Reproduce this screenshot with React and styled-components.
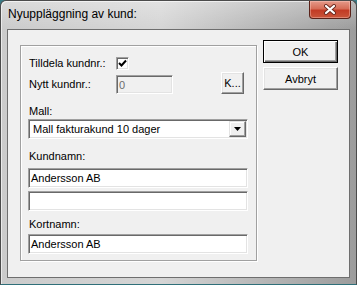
import React from 'react';
import styled, { createGlobalStyle } from 'styled-components';

const GlobalStyle = createGlobalStyle`
  html, body {
    margin: 0;
    padding: 0;
    background: #3a7b86;
  }
  body {
    font-family: "Liberation Sans", Arial, sans-serif;
  }
`;

const Window = styled.div`
  box-sizing: border-box;
  width: 357px;
  height: 285px;
  display: flex;
  flex-direction: column;
  border: 1px solid #4b4b4b;
  border-bottom-color: #2f6f79;
  border-radius: 6px 6px 0 0;
  padding: 0 6px 6px;
  background:
    linear-gradient(to bottom, rgba(255, 255, 255, 0.3), rgba(255, 255, 255, 0) 28px),
    linear-gradient(to right, #cbcbcb 0%, #d5d5d5 45%, #b5b5b5 75%, #9c9c9c 100%);
  box-shadow: inset 1px 1px rgba(255, 255, 255, 0.6);
  overflow: hidden;
`;

const TitleBar = styled.div`
  height: 28px;
  flex: none;
  display: flex;
  align-items: flex-start;
  justify-content: space-between;
  margin-right: -1px;
`;

const TitleText = styled.span`
  padding: 6px 0 0 1px;
  font-size: 12px;
  line-height: 14px;
  color: #000;
`;

const CloseButton = styled.div`
  box-sizing: border-box;
  width: 42px;
  height: 18px;
  display: flex;
  align-items: center;
  justify-content: center;
  border: 1px solid #5a2219;
  border-top: none;
  border-radius: 0 0 4px 4px;
  background: linear-gradient(to bottom, #e59a8a 0%, #d66d57 45%, #c23b25 55%, #c9553a 100%);
  box-shadow: inset 0 0 0 1px rgba(255, 210, 200, 0.4);
`;

const Client = styled.div`
  flex: 1;
  display: flex;
  align-items: flex-start;
  gap: 6px;
  padding: 10px 0 0 12px;
  border: 1px solid #6e6e6e;
  background: #f0f0f0;
  font-size: 11px;
  color: #000;
`;

const GroupBox = styled.div`
  box-sizing: border-box;
  width: 237px;
  height: 216px;
  margin-top: 5px;
  display: flex;
  flex-direction: column;
  padding: 0 8px 0 7px;
  border: 1px solid #a0a0a0;
  box-shadow: inset 1px 1px #fff, 1px 1px #fff;
`;

const ButtonColumn = styled.div`
  display: flex;
  flex-direction: column;
  gap: 4px;
`;

const PushButton = styled.button`
  box-sizing: border-box;
  width: ${({ $w }) => $w}px;
  height: ${({ $h }) => $h}px;
  padding: 0;
  margin: ${({ $m }) => $m || '0'};
  font-family: "Liberation Sans", Arial, sans-serif;
  font-size: 11px;
  color: #000;
  background: #f0f0f0;
  border: 1px solid;
  border-color: ${({ $default }) => ($default ? '#000' : '#fff #696969 #696969 #fff')};
  box-shadow: ${({ $default }) =>
    $default
      ? 'inset 1px 1px #fff, inset -1px -1px #696969, inset -2px -2px #a0a0a0'
      : 'inset -1px -1px #a0a0a0, inset 1px 1px #e3e3e3'};
`;

const Row = styled.div`
  display: flex;
  align-items: ${({ $align }) => $align || 'center'};
  margin-top: ${({ $mt }) => $mt}px;
`;

const Label = styled.div`
  width: ${({ $w }) => ($w ? `${$w}px` : 'auto')};
  flex: none;
  align-self: ${({ $self }) => $self || 'auto'};
  padding-left: 1px;
  box-sizing: border-box;
  line-height: 13px;
  margin-top: ${({ $mt }) => $mt || 0}px;
`;

const Field = styled.div`
  box-sizing: border-box;
  height: ${({ $h }) => $h || 20}px;
  width: ${({ $w }) => ($w ? `${$w}px` : 'auto')};
  margin-top: ${({ $mt }) => $mt || 0}px;
  display: flex;
  align-items: center;
  padding: 0 2px;
  border: 1px solid;
  border-color: #a0a0a0 #fff #fff #a0a0a0;
  box-shadow: inset 1px 1px #696969, inset -1px -1px #e3e3e3;
  background: ${({ $disabled }) => ($disabled ? '#f0f0f0' : '#fff')};
  color: ${({ $disabled }) => ($disabled ? '#6d6d6d' : '#000')};
  white-space: nowrap;
`;

const ComboText = styled.span`
  flex: 1;
  padding-left: 2px;
`;

const DropButton = styled.div`
  box-sizing: border-box;
  width: 17px;
  height: 16px;
  margin-right: -1px;
  display: flex;
  align-items: center;
  justify-content: center;
  background: #f0f0f0;
  border: 1px solid;
  border-color: #e3e3e3 #696969 #696969 #e3e3e3;
  box-shadow: inset -1px -1px #a0a0a0, inset 1px 1px #fff;
`;

const CheckBox = styled.div`
  box-sizing: border-box;
  width: 13px;
  height: 13px;
  display: flex;
  align-items: center;
  justify-content: center;
  background: #fff;
  border: 1px solid;
  border-color: #a0a0a0 #fff #fff #a0a0a0;
  box-shadow: inset 1px 1px #696969, inset -1px -1px #e3e3e3;
`;

export default function App() {
  return (
    <>
      <GlobalStyle />
      <Window>
        <TitleBar>
          <TitleText>Nyuppläggning av kund:</TitleText>
          <CloseButton>
            <svg width="14" height="11" viewBox="0 0 14 11">
              <path d="M3 2 L11 9 M11 2 L3 9" stroke="#6b2a20" strokeWidth="4" strokeLinecap="round" />
              <path d="M3 2 L11 9 M11 2 L3 9" stroke="#fff" strokeWidth="2.2" strokeLinecap="round" />
            </svg>
          </CloseButton>
        </TitleBar>
        <Client>
          <GroupBox>
            <Row $mt={11}>
              <Label $w={88}>Tilldela kundnr.:</Label>
              <CheckBox>
                <svg width="9" height="9" viewBox="0 0 9 9">
                  <path d="M1 4 L3.5 6.5 L8 1.5" stroke="#000" strokeWidth="2" fill="none" />
                </svg>
              </CheckBox>
            </Row>
            <Row $mt={2} $align="flex-end">
              <Label $w={88} $self="center" $mt={2}>Nytt kundnr.:</Label>
              <Field $w={57} $h={19} $disabled>0</Field>
              <PushButton $w={23} $h={22} $m="0 4px 0 auto">K...</PushButton>
            </Row>
            <Label $mt={11}>Mall:</Label>
            <Field $mt={1}>
              <ComboText>Mall fakturakund 10 dager</ComboText>
              <DropButton>
                <svg width="7" height="4" viewBox="0 0 7 4">
                  <path d="M0 0 H7 L3.5 4 Z" fill="#000" />
                </svg>
              </DropButton>
            </Field>
            <Label $mt={11}>Kundnamn:</Label>
            <Field $mt={5}>Andersson AB</Field>
            <Field $mt={3} />
            <Label $mt={7}>Kortnamn:</Label>
            <Field $mt={3}>Andersson AB</Field>
          </GroupBox>
          <ButtonColumn>
            <PushButton $w={75} $h={23} $default>OK</PushButton>
            <PushButton $w={75} $h={23}>Avbryt</PushButton>
          </ButtonColumn>
        </Client>
      </Window>
    </>
  );
}
